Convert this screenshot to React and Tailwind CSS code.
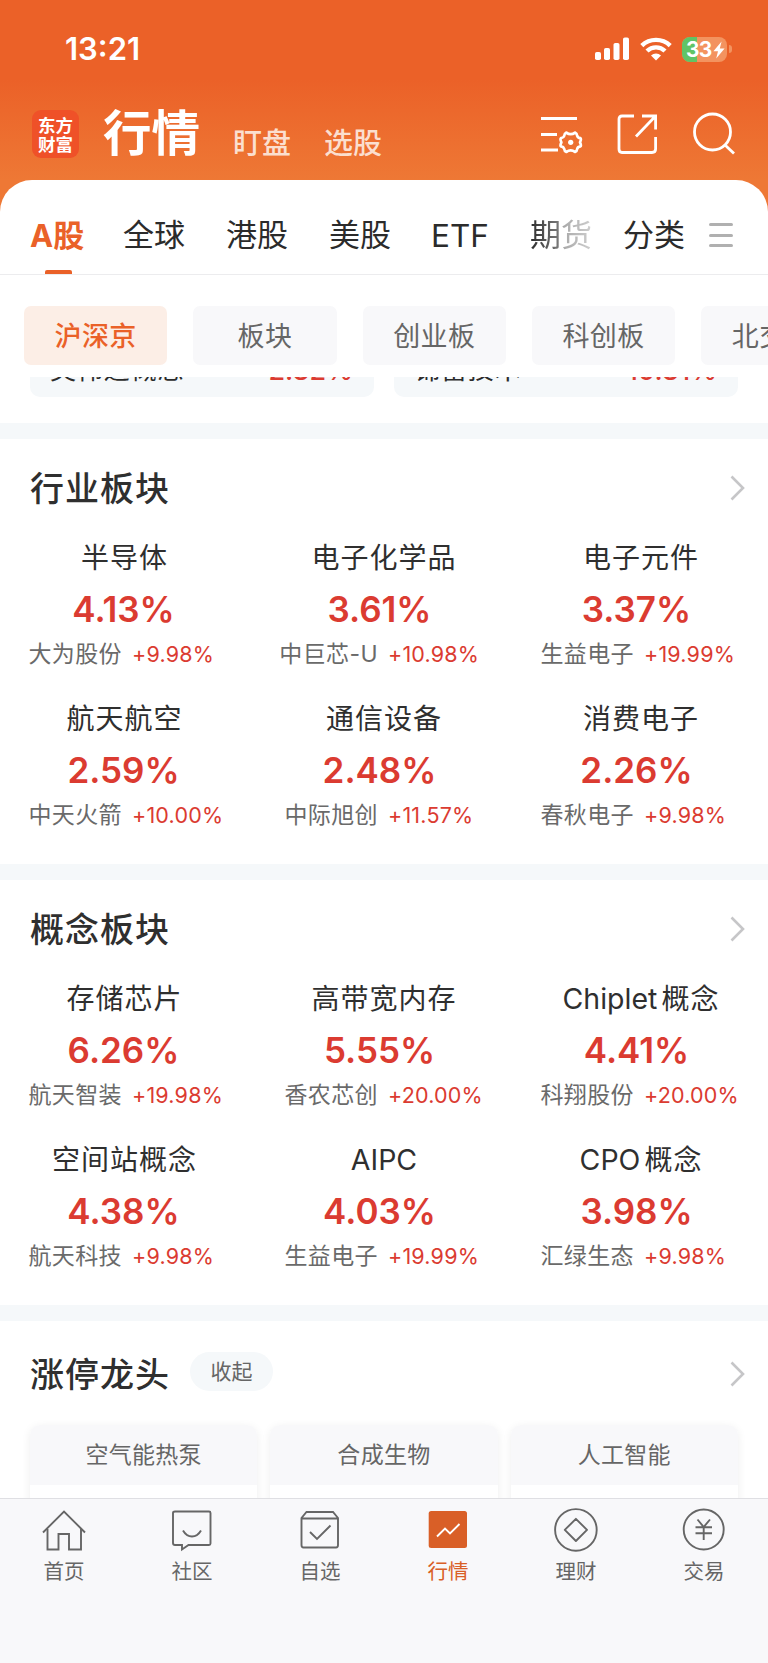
import React from "react";

const CJK = "font-['Noto_Sans_CJK_SC',sans-serif]";
const NUM = "font-['Inter','Noto_Sans_CJK_SC',sans-serif]";

const tabs = ["全球", "港股", "美股"];
const pills = ["沪深京", "板块", "创业板", "科创板", "北交所"];

const industry = [
  ["半导体", "4.13%", "大为股份", "+9.98%"],
  ["电子化学品", "3.61%", "中巨芯-U", "+10.98%"],
  ["电子元件", "3.37%", "生益电子", "+19.99%"],
  ["航天航空", "2.59%", "中天火箭", "+10.00%"],
  ["通信设备", "2.48%", "中际旭创", "+11.57%"],
  ["消费电子", "2.26%", "春秋电子", "+9.98%"],
];

const concept = [
  ["存储芯片", "6.26%", "航天智装", "+19.98%"],
  ["高带宽内存", "5.55%", "香农芯创", "+20.00%"],
  ["Chiplet概念", "4.41%", "科翔股份", "+20.00%"],
  ["空间站概念", "4.38%", "航天科技", "+9.98%"],
  ["AIPC", "4.03%", "生益电子", "+19.99%"],
  ["CPO概念", "3.98%", "汇绿生态", "+9.98%"],
];

const nameShift = ["pr-[7px]", "pl-[0px]", "pl-[2px]"];
const pctShift = ["pr-[9px]", "pr-[9px]", "pr-[7px]"];

function Chevron() {
  return (
    <svg className="mr-[23px] h-[26px] w-[15px]" viewBox="0 0 15 26" fill="none" stroke="#c6c6c8" strokeWidth="2.6">
      <path d="M1.5 1.5 L13 13 L1.5 24.5" />
    </svg>
  );
}

// Latin prefixes are set tighter than the Chinese part, with a small gap between them.
function Name({ text }) {
  const latin = text.match(/^[A-Za-z]*/)[0];
  const rest = text.slice(latin.length);
  return (
    <>
      {latin && <span className={`text-[28.5px] tracking-normal ${rest ? "mr-[4px]" : ""}`}>{latin}</span>}
      {rest && <span>{rest}</span>}
    </>
  );
}

function Cell({ item, col }) {
  return (
    <div className="h-[161px] w-64">
      <div className={`flex h-[38px] items-center justify-center whitespace-nowrap text-[28px] tracking-[1px] text-[#2f2f2f] ${NUM} ${nameShift[col]}`}>
        <Name text={item[0]} />
      </div>
      <div className={`mt-[10px] flex h-[44px] items-center justify-center text-[35px] font-semibold text-[#db3b31] ${NUM} ${pctShift[col]}`}>
        {item[1]}
      </div>
      <div className="mt-2 flex h-[30px] items-center whitespace-nowrap">
        <div className={`w-[122px] flex-none text-[23px] tracking-[0.4px] text-[#6a6a6a] ${NUM}`}>
          <span className="float-right">{item[2]}</span>
        </div>
        <div className={`ml-[10px] text-[21.5px] tracking-[0.2px] text-[#db3b31] ${NUM}`}>{item[3]}</div>
      </div>
    </div>
  );
}

function Board({ title, items }) {
  return (
    <section className="h-[441px] flex-none border-b-[16px] border-[#f5f8fa] bg-white">
      <div className="flex h-[98px] items-center justify-between pl-[30px]">
        <h2 className={`-mt-[4px] text-[34px] font-medium tracking-[1px] text-[#2f2f2f] ${CJK}`}>{title}</h2>
        <Chevron />
      </div>
      <div className="grid grid-cols-3 pt-[2px]">
        {items.map((it, i) => (
          <Cell key={it[0]} item={it} col={i % 3} />
        ))}
      </div>
    </section>
  );
}

function StatusIcons() {
  return (
    <div className="flex items-center">
      <svg className="h-[24px] w-[34px]" viewBox="0 0 34 24" fill="#fff">
        <rect x="0" y="15" width="6" height="8" rx="1.8" />
        <rect x="9" y="11" width="6" height="12" rx="1.8" />
        <rect x="18.5" y="6" width="6" height="17" rx="1.8" />
        <rect x="28" y="0.5" width="6" height="22.5" rx="1.8" />
      </svg>
      <svg className="ml-[11px] h-[24px] w-[32px]" viewBox="0 0 32 24" fill="none" stroke="#fff" strokeWidth="4.4">
        <path d="M1.8 8.6 A20.5 20.5 0 0 1 30.2 8.6" />
        <path d="M7 14 A13 13 0 0 1 25 14" />
        <path d="M16 23.4 L11 18.4 A7.2 7.2 0 0 1 21 18.4 Z" fill="#fff" stroke="none" />
      </svg>
      <div className="relative ml-[10px] h-[25px] w-[45px] overflow-hidden rounded-[8px] bg-[#f3935f]">
        <div className="h-full w-[15px] bg-[#60c466]" />
        <div className={`absolute inset-0 flex items-center pl-[4px] pt-[1px] text-[21px] font-bold tracking-[-0.8px] text-white ${NUM}`}>
          33
          <svg className="ml-[1px] h-[18px] w-[12px]" viewBox="0 0 12 18" fill="#fff">
            <path d="M8.6 0.5 L0.4 10.2 H5 L3.2 17.5 L11.6 7.4 H6.8 Z" />
          </svg>
        </div>
      </div>
      <div className="ml-[2px] h-[8px] w-[3px] rounded-r-full bg-[#f3935f]" />
    </div>
  );
}

function HeaderActions() {
  return (
    <div className="flex items-center">
      <svg className="h-[44px] w-[44px]" viewBox="0 0 44 44" fill="none" stroke="#fff" strokeWidth="2.8">
        <path d="M1 7.5 H37 M1 23.5 H17 M1 39 H18" />
        <path
          strokeWidth="2.7"
          strokeLinejoin="round"
          d="M26.4 21.6 Q28.4 23.2 30.7 23.2 Q33 23.2 35 21.6 Q37 22.4 37.2 24.8 Q37.8 26.8 40.4 27.2 Q41.6 28 40 31.3 Q41.6 34.6 40.4 35.4 Q37.8 35.8 37.2 37.8 Q37 40.2 35 41 Q33 39.4 30.7 39.4 Q28.4 39.4 26.4 41 Q24.4 40.2 24.2 37.8 Q23.6 35.8 21 35.4 Q19.8 34.6 21.4 31.3 Q19.8 28 21 27.2 Q23.6 26.8 24.2 24.8 Q24.4 22.4 26.4 21.6 Z"
        />
        <circle cx="30.7" cy="31.3" r="2.6" fill="#fff" stroke="none" />
      </svg>
      <svg className="ml-[32px] h-[44px] w-[44px]" viewBox="0 0 44 44" fill="none" stroke="#fff" strokeWidth="2.8">
        <path d="M18 5 H6 Q3 5 3 8 V38 Q3 41.5 6 41.5 H36 Q39.6 41.5 39.6 38 V26" />
        <path d="M26 5 H39.6 V18.5 M39.6 5 L20 25.5" />
      </svg>
      <svg className="ml-[32px] h-[44px] w-[44px]" viewBox="0 0 44 44" fill="none" stroke="#fff" strokeWidth="2.8">
        <circle cx="20.5" cy="21" r="18" />
        <path d="M33 34 L42 42.5" />
      </svg>
    </div>
  );
}

const navIcons = {
  home: (
    <>
      <path d="M1 22.5 L22 1.5 L43 22.5" />
      <path d="M5.5 19 V39.5 H16.5 V24 H27 V39.5 H39 V19" />
    </>
  ),
  chat: (
    <>
      <path d="M5 1.5 H39 Q40.5 1.5 40.5 3 V33.5 Q40.5 35 39 35 H18.5 L12 39.5 V35 H5 Q3 35 3 33 V3 Q3 1.5 5 1.5 Z" />
      <path d="M13 20.5 Q16.5 26.5 22 26.5 Q27.5 26.5 31 20.5" />
    </>
  ),
  box: (
    <>
      <path d="M3.5 8 L8.5 2 H35 L40 8 V35 Q40 37.5 38 37.5 H5.5 Q3.5 37.5 3.5 35 Z M3.5 8.5 H40" />
      <path d="M12 22 L19 29 L32.5 15.5" />
    </>
  ),
  chart: (
    <>
      <rect x="2.7" y="1" width="38.3" height="37" rx="2.5" fill="#d95f27" stroke="none" />
      <path d="M11 26.5 L19 18.5 L24 23.5 L33.5 14" stroke="#fff" />
    </>
  ),
  coin: (
    <>
      <circle cx="21.9" cy="19.9" r="20.8" />
      <path d="M21.9 8.8 L33 19.9 L21.9 31 L10.8 19.9 Z" strokeLinejoin="round" />
    </>
  ),
  yen: (
    <>
      <circle cx="21.7" cy="19.5" r="20" />
      <path d="M15.5 9.5 L21.7 17 L28 9.5 M13.5 17.3 H30 M13.5 23.3 H30 M21.7 17 V30" />
    </>
  ),
};

const nav = [
  ["home", "首页"],
  ["chat", "社区"],
  ["box", "自选"],
  ["chart", "行情"],
  ["coin", "理财"],
  ["yen", "交易"],
];

function TopCard({ name, value }) {
  return (
    <div className="flex h-[76px] w-[344px] items-center justify-between rounded-[10px] bg-[#f5f8fa] pl-[20px] pr-[21px] pt-[17px]">
      <span className={`text-[26px] tracking-[0.9px] text-[#2b2b2b] ${CJK}`}>{name}</span>
      <span className={`pt-[7px] text-[27px] font-medium text-[#db3b31] ${NUM}`}>{value}</span>
    </div>
  );
}

export default function App() {
  return (
    <div className={`flex h-[1663px] w-[768px] flex-col overflow-hidden bg-white ${CJK}`}>
      <header className="flex-none bg-[linear-gradient(180deg,#eb6128_0px,#eb6128_80px,#ee7835_180px)]">
        <div className="flex h-[98px] items-center justify-between pl-[65px] pr-[36px]">
          <div className={`text-[31px] font-semibold tracking-[0px] text-white ${NUM}`}>13:21</div>
          <StatusIcons />
        </div>
        <div className="flex h-[82px] items-start justify-between pl-[32px] pr-[32px]">
          <div className="flex">
            <div className="mt-[12px] flex h-[48px] w-[47px] flex-col items-center justify-center rounded-[9px] bg-[#ef5128] text-[17.5px] font-bold leading-[19px] text-white">
              <span>东方</span>
              <span>财富</span>
            </div>
            <div className="ml-[24px] mt-[2px] text-[48.5px] font-bold leading-[60px] text-white">行情</div>
            <div className="ml-[33px] mt-[23px] text-[29px] font-medium leading-[40px] text-[#fbdfcf]">盯盘</div>
            <div className="ml-[33px] mt-[23px] text-[29px] font-medium leading-[40px] text-[#fbdfcf]">选股</div>
          </div>
          <div className="mt-[13px]">
            <HeaderActions />
          </div>
        </div>
        <div className="flex h-[95px] rounded-t-[32px] border-b border-[#ececee] bg-white pl-[30px] text-[31px] leading-[40px] text-[#2b2b2b]">
          <div className={`relative w-[52px] whitespace-nowrap pt-[36px] font-bold text-[#ea6128] ${NUM}`}>
            A股
            <div className="absolute bottom-0 left-[15px] h-[4px] w-[27px] rounded-t-[2px] bg-[#ea6128]" />
          </div>
          {tabs.map((t) => (
            <div key={t} className="ml-[41px] whitespace-nowrap pt-[33px]">{t}</div>
          ))}
          <div className={`ml-[40px] w-[60px] pt-[36px] text-[31.5px] ${NUM}`}>ETF</div>
          <div className="ml-[39px] pt-[33px]">
            <span className="bg-[linear-gradient(90deg,#2b2b2b,#777_45%,#aaa_55%,#cfcfcf)] bg-clip-text text-transparent">期货</span>
          </div>
          <div className="ml-[31px] pt-[33px]">分类</div>
          <div className="ml-[24px] mt-[43px] flex h-[24px] w-[24px] flex-col justify-between">
            <div className="h-[3px] rounded-full bg-[#b0b0b0]" />
            <div className="h-[3px] rounded-full bg-[#b0b0b0]" />
            <div className="h-[3px] rounded-full bg-[#b0b0b0]" />
          </div>
        </div>
      </header>

      <div className="flex h-[102px] flex-none gap-[26px] overflow-hidden pl-6 pt-[31px]">
        {pills.map((p, i) => (
          <div
            key={p}
            className={`flex h-[59px] w-[143.3px] flex-none items-center justify-center rounded-[7px] text-[27px] tracking-[0.4px] ${
              i === 0 ? "bg-[#fceee6] font-medium text-[#ea6128]" : "bg-[#f8f8fa] text-[#666]"
            }`}
          >
            {p}
          </div>
        ))}
      </div>

      <div className="flex h-[46px] flex-none items-end gap-5 overflow-hidden pb-[26px] pl-[30px]">
        <TopCard name="英伟达概念" value="2.32%" />
        <TopCard name="锦富技术" value="10.31%" />
      </div>
      <div className="h-4 flex-none bg-[#f5f8fa]" />

      <Board title="行业板块" items={industry} />
      <Board title="概念板块" items={concept} />

      <section className="flex h-[177px] flex-none flex-col overflow-hidden bg-white">
        <div className="flex h-[104px] flex-none items-center pl-[30px]">
          <h2 className="-mt-[2px] text-[34px] font-medium tracking-[1px] text-[#2f2f2f]">涨停龙头</h2>
          <div className="mb-[3px] ml-[20px] flex h-[39px] w-[83px] items-center justify-center rounded-full bg-[#f5f8fa] pb-[1px] text-[21px] text-[#666]">
            收起
          </div>
          <div className="ml-auto pt-[2px]">
            <Chevron />
          </div>
        </div>
        <div className="flex gap-[13px] pl-[30px]">
          {["空气能热泵", "合成生物", "人工智能"].map((t) => (
            <div key={t} className="h-[120px] w-[227.3px] rounded-[10px] bg-white shadow-[0_2px_10px_rgba(0,0,0,0.07)]">
              <div className="flex h-[60px] items-center justify-center rounded-t-[10px] bg-[#f8f8fa] pb-[3px] text-[23px] tracking-[0.3px] text-[#666]">
                {t}
              </div>
            </div>
          ))}
        </div>
      </section>

      <nav className="grid flex-1 grid-cols-6 border-t border-[#dfdfe3] bg-[#f8f8fa]">
        {nav.map(([icon, label]) => (
          <div key={icon} className="flex flex-col items-center pt-[11px]">
            <svg className="h-[42px] w-[44px] overflow-visible" viewBox="0 0 44 42" fill="none" stroke="#666" strokeWidth="1.9">
              {navIcons[icon]}
            </svg>
            <div className={`mt-[4px] text-[20.5px] leading-[28px] ${icon === "chart" ? "text-[#d95f27]" : "text-[#666]"}`}>
              {label}
            </div>
          </div>
        ))}
      </nav>
    </div>
  );
}
